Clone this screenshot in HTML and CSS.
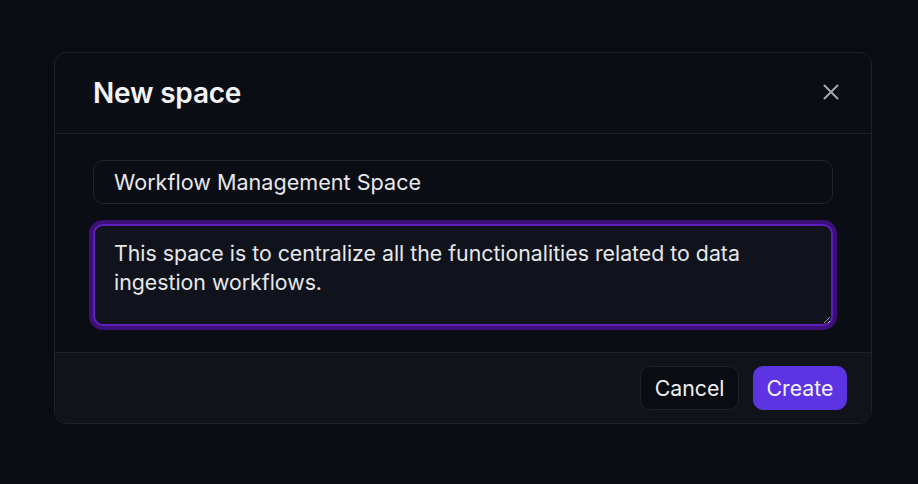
FILE: index.html
```html
<!DOCTYPE html>
<html lang="en">
<head>
<meta charset="utf-8">
<title>New space</title>
<link rel="stylesheet" href="styles.css">
</head>
<body>
<div class="dialog">
  <div class="dialog-header">
    <h2 class="dialog-title">New space</h2>
    <button class="close-btn" aria-label="Close">
      <svg width="18" height="18" viewBox="0 0 18 18" fill="none" stroke="currentColor" stroke-width="2" stroke-linecap="round"><path d="M2.5 2.5l13 13M15.5 2.5l-13 13"/></svg>
    </button>
  </div>
  <div class="dialog-body">
    <input class="field" type="text" value="Workflow Management Space">
    <textarea class="field area">This space is to centralize all the functionalities related to data ingestion workflows.</textarea>
  </div>
  <div class="dialog-footer">
    <button class="btn btn-secondary">Cancel</button>
    <button class="btn btn-primary">Create</button>
  </div>
</div>
</body>
</html>
```
FILE: styles.css
```css
html, body {
  margin: 0;
  padding: 0;
  background: #0a0c13;
  color-scheme: dark;
}
body {
  font-family: Inter, "Noto Sans", sans-serif;
  padding: 52px 46px 0 54px;
}
.dialog {
  width: 818px;
  box-sizing: border-box;
  border: 1px solid #1e212b;
  border-radius: 12px;
  background: #0b0d15;
  overflow: hidden;
}
.dialog-header {
  height: 81px;
  box-sizing: border-box;
  border-bottom: 1px solid #1e212b;
  display: flex;
  align-items: center;
  justify-content: space-between;
  padding: 0 29px 0 38px;
}
.dialog-title {
  margin: 0;
  font-size: 28px;
  font-weight: 600;
  color: #f4f4f6;
  letter-spacing: -0.2px;
}
.close-btn {
  background: none;
  border: none;
  padding: 0;
  width: 22px;
  height: 22px;
  display: flex;
  align-items: center;
  justify-content: center;
  color: #a3a6ae;
  margin-top: -2px;
}
.dialog-body {
  padding: 26px 38px 26px 38px;
  display: flex;
  flex-direction: column;
  gap: 20px;
}
.field {
  box-sizing: border-box;
  width: 100%;
  font-family: Inter, "Noto Sans", sans-serif;
  font-size: 21.6px;
  color: #e7e8ec;
  background: #0b0d15;
  border: 1px solid #22252f;
  border-radius: 10px;
  outline: none;
  margin: 0;
}
input.field {
  height: 44px;
  padding: 0 20px;
}
.area {
  font-size: 21.3px;
  height: 102px;
  padding: 13px 19px;
  line-height: 29px;
  background: #10131b;
  border: 2px solid #5e20bd;
  box-shadow: 0 0 0 4px #3d1079;
  resize: vertical;
  display: block;
}
.dialog-footer {
  background: #10131a;
  border-top: 1px solid #1e212b;
  height: 71px;
  box-sizing: border-box;
  display: flex;
  justify-content: flex-end;
  align-items: center;
  gap: 14px;
  padding: 0 24px;
}
.btn {
  font-family: Inter, "Noto Sans", sans-serif;
  font-size: 21.3px;
  height: 44px;
  border-radius: 10px;
  cursor: pointer;
}
.btn-secondary {
  padding: 0 13.5px;
  background: #0a0c12;
  color: #eeeff2;
  border: 1px solid #1e212b;
}
.btn-primary {
  padding: 0 12.5px;
  background: #5c34e2;
  color: #f4f2ff;
  border: 1px solid #5c34e2;
}
```
